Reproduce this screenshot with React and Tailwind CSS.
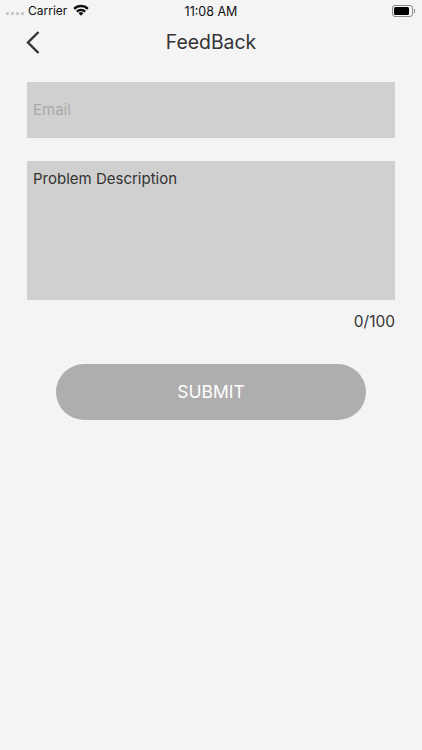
const FONT = "font-['Inter','Liberation_Sans',sans-serif]";

function WifiIcon() {
  return (
    <svg width="16" height="12" viewBox="0 0 16 12" className="ml-[6px] mb-[1px]">
      <path d="M0.3 4 A11 11 0 0 1 15.7 4 L14 5.8 A8.6 8.6 0 0 0 2 5.8 Z" fill="#111" />
      <path d="M3 6.7 A7.2 7.2 0 0 1 13 6.7 L11.3 8.4 A4.9 4.9 0 0 0 4.7 8.4 Z" fill="#111" />
      <path d="M5.6 9.2 A3.5 3.5 0 0 1 10.4 9.2 L8 11.7 Z" fill="#111" />
    </svg>
  );
}

function SignalDots() {
  return (
    <div className="flex gap-[2px] items-center mr-[4px] mt-[5px]">
      {[0, 1, 2, 3].map((i) => (
        <span key={i} className="w-[3px] h-[3px] rounded-full bg-[#c0c0c0]" />
      ))}
    </div>
  );
}

function Battery() {
  return (
    <div className="flex items-center">
      <div className="w-[21px] h-[12px] rounded-[3px] border border-[#8a8a8a] p-[1px]">
        <div className="w-[15px] h-full rounded-[1.5px] bg-black" />
      </div>
      <div className="w-[1px] h-[4px] bg-[#8a8a8a] ml-[1px]" />
    </div>
  );
}

export default function App() {
  return (
    <div className={`${FONT} w-[422px] h-[750px] bg-[#f4f4f4] text-[#333] overflow-hidden`}>
      <div className="relative h-[21px] flex items-center justify-between pl-[6px] pr-[7px] text-[#111] text-[12px]">
        <div className="flex items-center">
          <SignalDots />
          <span>Carrier</span>
          <WifiIcon />
        </div>
        <span className="absolute left-0 right-0 top-[3px] text-center text-[12.5px]">11:08 AM</span>
        <Battery />
      </div>

      <div className="relative h-[42px] flex items-center justify-center pt-[2px]">
        <svg width="16" height="26" viewBox="0 0 16 26" className="absolute left-[25px] top-[8px]">
          <path d="M13.5 3 L3 13.5 L13.5 24" fill="none" stroke="#333" strokeWidth="2.4" />
        </svg>
        <span className="text-[19.4px] leading-none">FeedBack</span>
      </div>

      <div className="px-[27px] pt-[19px]">
        <div className="h-[56px] bg-[#d0d0d0] flex items-center px-[6px] pt-[1px] text-[15px] text-[#a9a9a9]">Email</div>
        <div className="h-[139px] mt-[23px] bg-[#d0d0d0] px-[6px] pt-[8px] text-[15px] leading-[20px]">Problem Description</div>
        <div className="text-right text-[15.5px] leading-[20px] mt-[12px]">0/100</div>
        <div className="mx-[29px] mt-[32px] h-[56px] rounded-[28px] bg-[#aeaeae] flex items-center justify-center text-white text-[17.5px]">
          SUBMIT
        </div>
      </div>
    </div>
  );
}
